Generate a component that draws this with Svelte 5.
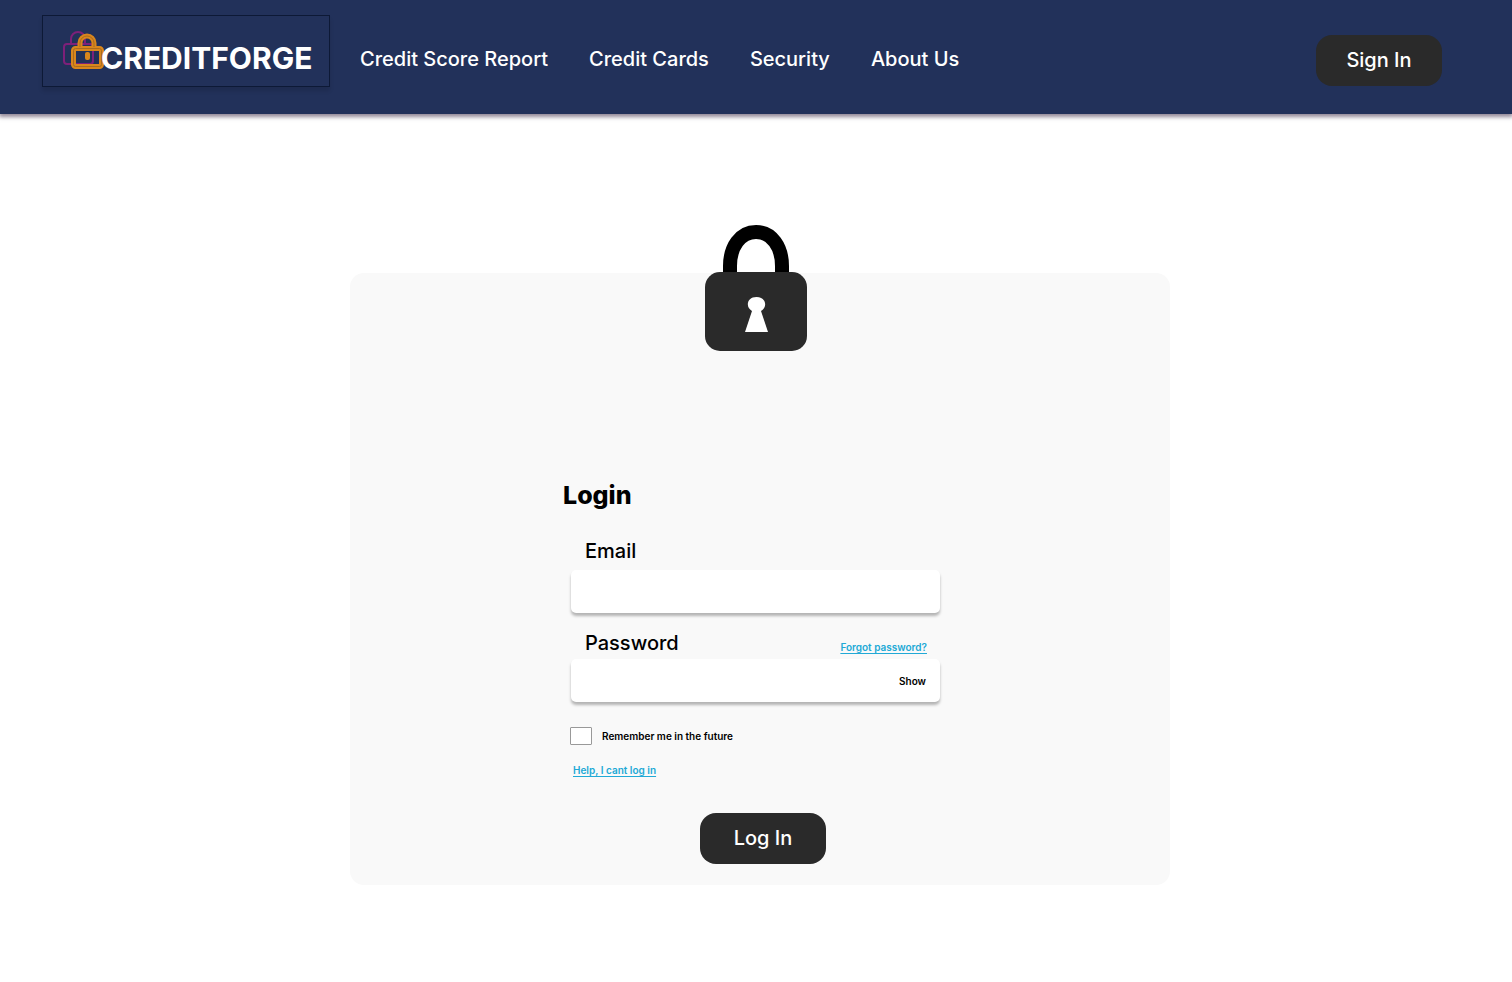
<script>
  const links = ['Credit Score Report', 'Credit Cards', 'Security', 'About Us'];
  let email = $state('');
  let password = $state('');
  let remember = $state(false);
  let visible = $state(false);
</script>

<div class="page">
  <header>
    <a class="brand" href="#home">
      <svg width="42" height="40" viewBox="0 0 42 40" fill="none" aria-hidden="true">
        <g stroke="#7d2079" stroke-width="2">
          <rect x="1" y="13" width="29" height="20" rx="3" />
          <path d="M8 13V8a7 7 0 0 1 14 0v5" />
        </g>
        <g stroke="#d9861c" stroke-width="5">
          <rect x="10.500" y="17.500" width="28" height="18" rx="2" />
          <path d="M17 16v-4a7 7 0 0 1 14 0v4" />
        </g>
        <g stroke="#a86a20" stroke-width="1">
          <rect x="10.500" y="17.500" width="28" height="18" rx="2" />
          <path d="M17 16v-4a7 7 0 0 1 14 0v4" />
        </g>
        <rect x="22" y="21" width="5" height="8" rx="2" fill="#d9861c" />
      </svg>
      <span>CREDITFORGE</span>
    </a>
    <nav>
      {#each links as link}
        <a href="#{link.toLowerCase().replaceAll(' ', '-')}">{link}</a>
      {/each}
    </nav>
    <button class="dark" type="button">Sign In</button>
  </header>

  <main>
    <section class="card">
      <svg class="lock" width="102" height="126" viewBox="0 0 102 126" aria-hidden="true">
        <path d="M25 54V41C25 22 35 7 51 7s26 15 26 34v13" fill="none" stroke="#000" stroke-width="14" />
        <rect y="47" width="102" height="79" rx="15" fill="#2a2a2a" />
        <path d="M40 107 47 86C40 82 42 72 51.500 72S63 82 56 86l7 21Z" fill="#fff" />
      </svg>

      <form onsubmit={(e) => e.preventDefault()}>
        <h1>Login</h1>

        <div class="field">
          <div class="caption"><label for="email">Email</label></div>
          <input id="email" class="box" type="email" bind:value={email} />
        </div>

        <div class="field">
          <div class="caption tight">
            <label for="password">Password</label>
            <a class="link" href="#forgot">Forgot password?</a>
          </div>
          <div class="box">
            <input id="password" type={visible ? 'text' : 'password'} bind:value={password} />
            <button class="show" type="button" onclick={() => (visible = !visible)}>Show</button>
          </div>
        </div>

        <div class="remember">
          <input id="remember" type="checkbox" bind:checked={remember} />
          <label for="remember">Remember me in the future</label>
        </div>

        <a class="link help" href="#help">Help, I cant log in</a>
        <button class="dark submit" type="submit">Log In</button>
      </form>
    </section>
  </main>
</div>

<style>
  :global(body) {
    margin: 0;
    background: #fff;
  }

  .page {
    font-family: Inter, sans-serif;
    color: #000;
  }

  .page :is(a, button, input, label, header, div) {
    box-sizing: border-box;
  }

  header {
    display: flex;
    align-items: flex-start;
    height: 114px;
    padding: 15px 70px 0 42px;
    background: #22315a;
    box-shadow: 0 2px 4px 1px rgba(40, 20, 50, 0.5);
  }

  .brand {
    display: flex;
    align-items: flex-start;
    width: 288px;
    height: 72px;
    padding: 15px 0 0 20px;
    border: 1px solid #0d1936;
    box-shadow: 0 4px 4px rgba(0, 0, 0, 0.12);
    color: #fff;
    font-size: 30px;
    line-height: 36px;
    font-weight: 700;
    text-decoration: none;
  }

  .brand span {
    margin: 9px 0 0 -4px;
  }

  nav {
    display: flex;
    flex: 1;
    gap: 41px;
    margin: 32px 0 0 30px;
  }

  nav a {
    color: #fff;
    font-size: 20px;
    line-height: 24px;
    font-weight: 500;
    text-decoration: none;
    white-space: nowrap;
  }

  .dark {
    width: 126px;
    height: 51px;
    padding: 0 0 2px;
    border: 0;
    border-radius: 16px;
    background: #2a2a2a;
    color: #fff;
    font: 500 20px/24px Inter, sans-serif;
    cursor: pointer;
  }

  header .dark {
    margin-top: 20px;
  }

  main {
    display: flex;
    justify-content: center;
    padding: 159px 0 97px 8px;
  }

  .card {
    display: flex;
    flex-direction: column;
    align-items: center;
    box-sizing: border-box;
    width: 820px;
    padding: 0 8px 21px 0;
    border-radius: 14px;
    background: #f9f9f9;
  }

  .lock {
    margin-top: -48px;
  }

  form {
    display: flex;
    flex-direction: column;
    width: 386px;
    margin-top: 128px;
  }

  h1 {
    margin: 0 0 28px;
    font-size: 25px;
    line-height: 32px;
    font-weight: 800;
  }

  .field {
    margin: 0 9px 18px 8px;
  }

  .caption {
    display: flex;
    align-items: flex-start;
    justify-content: space-between;
    height: 31px;
    padding: 0 13px 0 14px;
  }

  .caption.tight {
    height: 28px;
  }

  .caption label {
    font-size: 20px;
    line-height: 24px;
    font-weight: 500;
  }

  .link {
    color: #21a9d6;
    font-size: 10px;
    line-height: 12px;
    font-weight: 600;
    text-underline-offset: 2px;
  }

  .caption .link {
    margin-top: 10px;
  }

  .box {
    display: flex;
    width: 100%;
    height: 43px;
    padding: 0 14px;
    border: 0;
    border-radius: 5px;
    background: #fff;
    box-shadow: 0 3px 3px rgba(0, 0, 0, 0.28);
    font: 16px Inter, sans-serif;
  }

  .box input {
    flex: 1;
    min-width: 0;
    border: 0;
    background: transparent;
    font: inherit;
    outline: 0;
  }

  .show {
    padding: 0;
    border: 0;
    background: transparent;
    color: #000;
    font: 600 10px/12px Inter, sans-serif;
    cursor: pointer;
  }

  .remember {
    display: flex;
    align-items: center;
    gap: 10px;
    margin: 7px 0 0 7px;
  }

  .remember input {
    appearance: none;
    width: 22px;
    height: 18px;
    margin: 0;
    border: 1px solid #999;
    border-radius: 1px;
    background: #fff;
  }

  .remember input:checked {
    background: #2a2a2a;
  }

  .remember label {
    font-size: 10px;
    line-height: 12px;
    font-weight: 600;
  }

  .help {
    align-self: flex-start;
    margin: 19px 0 37px 10px;
  }

  .submit {
    align-self: center;
    margin-left: 14px;
  }
</style>
